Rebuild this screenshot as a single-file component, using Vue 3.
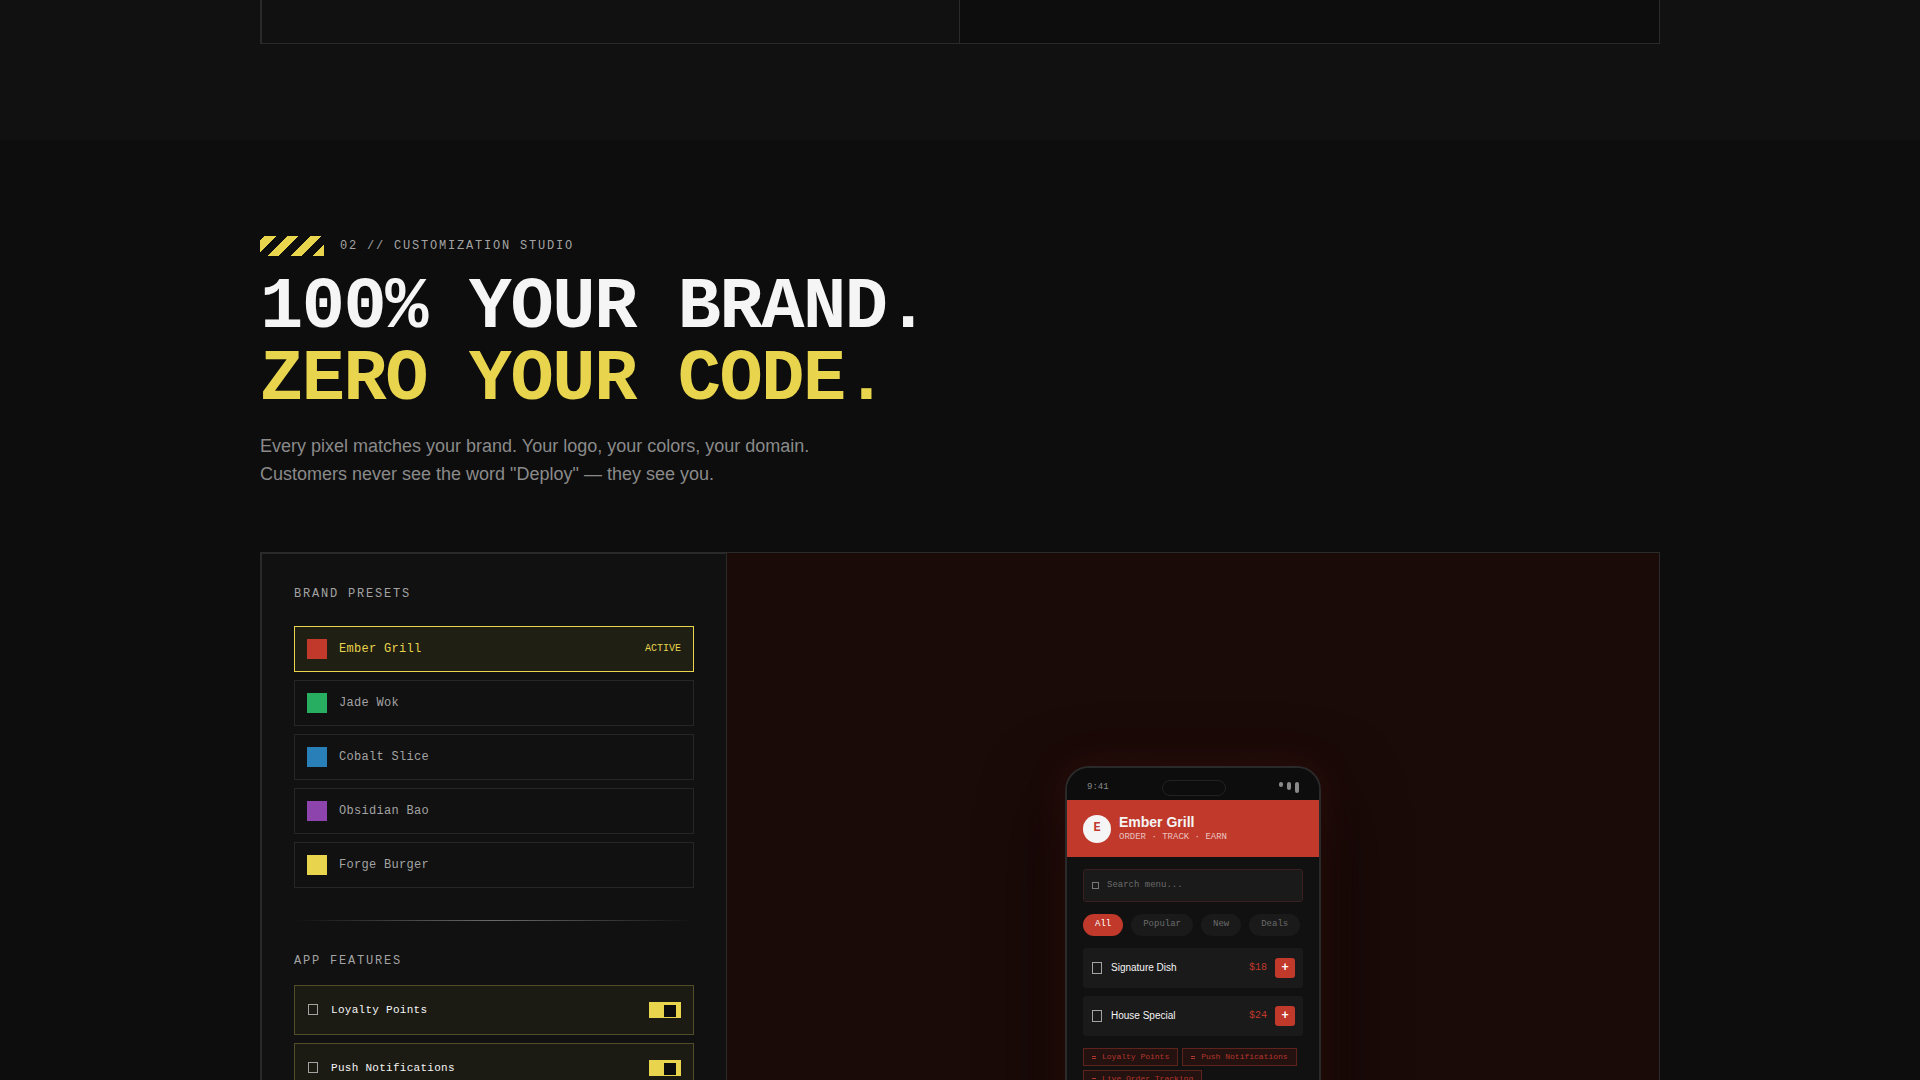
<script setup>
import { ref } from 'vue'

const active = ref('Ember Grill')
const presets = [
  { name: 'Ember Grill', color: '#c0392b' },
  { name: 'Jade Wok', color: '#27ae60' },
  { name: 'Cobalt Slice', color: '#2980b9' },
  { name: 'Obsidian Bao', color: '#8e44ad' },
  { name: 'Forge Burger', color: '#e8d44d' },
]
const features = ref([
  { name: 'Loyalty Points', on: true },
  { name: 'Push Notifications', on: true },
  { name: 'Live Order Tracking', on: true },
])
const categories = ['All', 'Popular', 'New', 'Deals']
const dishes = [
  { name: 'Signature Dish', price: '$18' },
  { name: 'House Special', price: '$24' },
]
</script>

<template>
  <div class="page">
    <section class="previous">
      <div class="wrap split">
        <div class="split-left"></div>
        <div class="split-right"></div>
      </div>
    </section>

    <section class="studio-section">
      <div class="wrap">
        <div class="eyebrow">
          <span class="hazard"></span>
          <span class="eyebrow-text">02 // CUSTOMIZATION STUDIO</span>
        </div>
        <h2>100% YOUR BRAND.<br /><span class="accent">ZERO YOUR CODE.</span></h2>
        <p class="lead">
          Every pixel matches your brand. Your logo, your colors, your domain. Customers never see
          the word "Deploy" — they see you.
        </p>

        <div class="studio">
          <aside class="controls">
            <h3>BRAND PRESETS</h3>
            <div class="presets">
              <button
                v-for="p in presets"
                :key="p.name"
                type="button"
                class="preset"
                :class="{ active: active === p.name }"
                @click="active = p.name"
              >
                <span class="swatch" :style="{ background: p.color }"></span>
                <span class="preset-name">{{ p.name }}</span>
                <span v-if="active === p.name" class="flag">ACTIVE</span>
              </button>
            </div>

            <div class="divider"></div>

            <h3 class="tight">APP FEATURES</h3>
            <div class="features">
              <label v-for="f in features" :key="f.name" class="feature">
                <svg class="glyph" width="10" height="12" viewBox="0 0 10 12">
                  <rect x="0.5" y="0.5" width="9" height="10" />
                </svg>
                <span class="feature-name">{{ f.name }}</span>
                <input v-model="f.on" type="checkbox" class="toggle" />
              </label>
            </div>
          </aside>

          <div class="preview">
            <div class="phone">
              <div class="status">
                <span class="time">9:41</span>
                <span class="island"></span>
                <span class="bars"><i class="bar low"></i><i class="bar mid"></i><i class="bar high"></i></span>
              </div>
              <header class="app-head">
                <span class="avatar">E</span>
                <div>
                  <div class="app-name">Ember Grill</div>
                  <div class="app-tag">ORDER · TRACK · EARN</div>
                </div>
              </header>
              <div class="app-body">
                <label class="search">
                  <svg class="glyph dim" width="7" height="8" viewBox="0 0 7 8">
                    <rect x="0.5" y="0.5" width="6" height="6" />
                  </svg>
                  <input type="text" placeholder="Search menu..." aria-label="Search menu" />
                </label>
                <div class="chips">
                  <button v-for="(c, i) in categories" :key="c" type="button" class="chip" :class="{ on: i === 0 }">{{ c }}</button>
                </div>
                <div class="dishes">
                  <div v-for="d in dishes" :key="d.name" class="dish">
                    <svg class="glyph" width="10" height="12" viewBox="0 0 10 12">
                      <rect x="0.5" y="0.5" width="9" height="11" />
                    </svg>
                    <span class="dish-name">{{ d.name }}</span>
                    <span class="price">{{ d.price }}</span>
                    <button type="button" class="add">+</button>
                  </div>
                </div>
                <div class="tags">
                  <span v-for="f in features" :key="f.name" class="tag">
                    <svg width="5" height="5" viewBox="0 0 5 5"><path d="M0 1.5h4M0 3.5h4" /></svg>
                    {{ f.name }}
                  </span>
                </div>
              </div>
            </div>
          </div>
        </div>
      </div>
    </section>
  </div>
</template>

<style>
body {
  margin: 0;
  background: #0d0d0d;
}
</style>

<style scoped>
* {
  box-sizing: border-box;
}
.page {
  height: 100vh;
  overflow: hidden;
  color: #f5f5f5;
  font-family: 'Liberation Sans', Arial, sans-serif;
  font-size: 16px;
  line-height: 24px;
}
button,
input {
  margin: 0;
  font-family: 'Liberation Mono', 'Courier New', monospace;
}
.wrap {
  max-width: 1400px;
  margin: 0 auto;
}
.previous {
  background: #111;
  padding-bottom: 96px;
}
.split {
  display: grid;
  grid-template-columns: 1fr 1fr;
  height: 44px;
  border: 1px solid #2a2a2a;
  border-top: 0;
}
.split-left {
  border: solid #2a2a2a;
  border-width: 0 1px;
}
.split-right {
  background: #0d0d0d;
}
.studio-section {
  background: #0d0d0d;
  padding: 96px 0;
}
.eyebrow {
  display: flex;
  align-items: center;
  gap: 16px;
  margin-bottom: 16px;
  line-height: 20px;
}
.hazard {
  width: 64px;
  height: 20px;
  background: repeating-linear-gradient(-45deg, #e8d44d 0, #e8d44d 8px, #0d0d0d 8px, #0d0d0d 16px);
}
.eyebrow-text {
  color: #a3a3a3;
  font-family: 'Liberation Mono', monospace;
  font-size: 12px;
  line-height: 16px;
  letter-spacing: 0.15em;
}
h2 {
  margin: 0 0 16px;
  font-family: 'Liberation Mono', monospace;
  font-size: 72px;
  font-weight: 700;
  line-height: 72px;
  letter-spacing: -0.02em;
}
.accent {
  color: #e8d44d;
}
.lead {
  max-width: 576px;
  margin: 0 0 64px;
  color: #8a8a8a;
  font-size: 18px;
  line-height: 28px;
}
.studio {
  display: grid;
  grid-template-columns: 1fr 2fr;
  border: 1px solid #2a2a2a;
}
.controls {
  padding: 32px;
  background: #111;
  border: 1px solid #2a2a2a;
}
h3 {
  margin: 0 0 24px;
  color: #a3a3a3;
  font-family: 'Liberation Mono', monospace;
  font-size: 12px;
  font-weight: 400;
  line-height: 16px;
  letter-spacing: 0.15em;
}
h3.tight {
  margin-bottom: 16px;
}
.presets,
.features {
  display: flex;
  flex-direction: column;
  gap: 8px;
}
.preset {
  display: flex;
  align-items: center;
  gap: 12px;
  padding: 12px;
  background: none;
  border: 1px solid #262626;
  color: #a3a3a3;
  font-size: 12px;
  line-height: 16px;
  letter-spacing: 0.025em;
  text-align: left;
}
.preset.active {
  background: #201f14;
  border-color: #e8d44d;
  color: #e8d44d;
}
.swatch {
  width: 20px;
  height: 20px;
}
.preset-name,
.feature-name,
.dish-name {
  flex: 1;
}
.flag {
  font-size: 10px;
  letter-spacing: 0;
}
.divider {
  height: 1px;
  margin: 32px 0;
  background: linear-gradient(90deg, transparent, #6b6b6b, transparent);
}
.feature {
  display: flex;
  align-items: center;
  gap: 13px;
  padding: 12px 12px 12px 13px;
  background: #1b1a13;
  border: 1px solid #524d29;
  font-family: 'Liberation Mono', monospace;
  font-size: 11px;
  line-height: 24px;
  letter-spacing: 0.025em;
}
.glyph {
  flex: none;
  fill: none;
  stroke: #a3a3a3;
}
.glyph.dim {
  stroke: #777;
}
.toggle {
  position: relative;
  appearance: none;
  width: 32px;
  height: 16px;
  background: #e8d44d;
}
.toggle::after {
  content: '';
  position: absolute;
  top: 3px;
  left: 3px;
  width: 12px;
  height: 12px;
  background: #0d0d0d;
}
.toggle:checked::after {
  left: 15px;
}
.preview {
  display: flex;
  justify-content: center;
  padding-top: 213px;
  background: #1a0a08;
}
.phone {
  width: 256px;
  height: 520px;
  overflow: hidden;
  background: #111;
  border: 2px solid #2a2a2a;
  border-radius: 24px;
  box-shadow: 0 0 40px rgba(192, 57, 43, 0.15), 0 30px 80px rgba(0, 0, 0, 0.6);
}
.status {
  display: flex;
  justify-content: space-between;
  align-items: center;
  height: 32px;
  padding: 8px 20px 0;
  background: #0d0d0d;
}
.time {
  padding-bottom: 2px;
  color: #8a8a8a;
  font-family: 'Liberation Mono', monospace;
  font-size: 9px;
  line-height: 14px;
}
.island {
  width: 64px;
  height: 16px;
  border: 1px solid #222;
  border-radius: 8px;
}
.bars {
  display: flex;
  gap: 4px;
  height: 12px;
}
.bar {
  width: 4px;
  background: #8a8a8a;
  border-radius: 2px;
}
.low {
  height: 5px;
}
.mid {
  height: 8px;
}
.high {
  height: 11px;
}
.app-head {
  display: flex;
  align-items: center;
  gap: 8px;
  height: 57px;
  padding: 0 16px;
  background: #c0392b;
}
.avatar {
  width: 28px;
  height: 28px;
  border-radius: 50%;
  background: #f5f5f5;
  color: #c0392b;
  font-family: 'Liberation Mono', monospace;
  font-size: 12px;
  font-weight: 700;
  line-height: 26px;
  text-align: center;
}
.app-name {
  font-size: 14px;
  font-weight: 700;
  line-height: 16px;
}
.app-tag {
  color: rgba(255, 255, 255, 0.7);
  font-family: 'Liberation Mono', monospace;
  font-size: 9px;
  line-height: 14px;
}
.app-body {
  padding: 12px 16px;
}
.search {
  display: flex;
  align-items: center;
  gap: 8px;
  height: 33px;
  padding: 0 8px;
  background: #1a1a1a;
  border: 1px solid #3a2022;
  border-radius: 3px;
}
.search input {
  flex: 1;
  min-width: 0;
  padding: 0 0 2px;
  background: none;
  border: 0;
  color: #f5f5f5;
  font-size: 9px;
  line-height: 14px;
}
.search input::placeholder {
  color: #6b6b6b;
}
.chips {
  display: flex;
  gap: 8px;
  margin: 12px 0;
}
.chip {
  height: 22px;
  padding: 0 12px 3px;
  background: #1a1a1a;
  border: 0;
  border-radius: 11px;
  color: #6b6b6b;
  font-size: 9px;
  line-height: 14px;
}
.chip.on {
  background: #c0392b;
  color: #fff;
}
.dishes {
  display: flex;
  flex-direction: column;
  gap: 8px;
  margin-bottom: 12px;
}
.dish {
  display: flex;
  align-items: center;
  height: 40px;
  padding: 0 8px 0 9px;
  background: #1a1a1a;
  border-radius: 3px;
}
.dish-name {
  margin-left: 9px;
  font-size: 10px;
}
.price {
  margin-right: 8px;
  color: #c0392b;
  font-family: 'Liberation Mono', monospace;
  font-size: 10px;
}
.add {
  width: 20px;
  height: 20px;
  padding: 0;
  background: #c0392b;
  border: 0;
  border-radius: 3px;
  color: #fff;
  font-size: 12px;
  font-weight: 700;
  line-height: 20px;
}
.tags {
  display: flex;
  flex-wrap: wrap;
  gap: 4px;
}
.tag {
  display: flex;
  align-items: center;
  gap: 5px;
  height: 18px;
  padding: 0 8px;
  background: #241211;
  border: 1px solid #5f231d;
  color: #b4362a;
  font-family: 'Liberation Mono', monospace;
  font-size: 8px;
  line-height: 16px;
}
.tag svg {
  fill: none;
  stroke: currentColor;
}
</style>
